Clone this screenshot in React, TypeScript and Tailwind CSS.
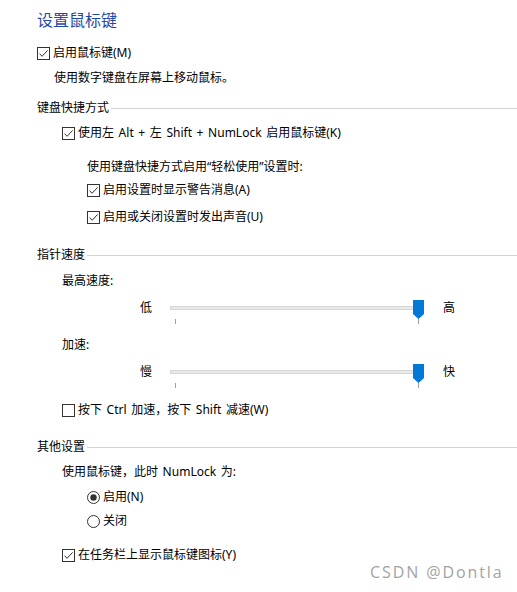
import React from "react";

const Check = ({ checked }: { checked: boolean }) => (
  <svg width="13" height="13" viewBox="0 0 13 13" className="shrink-0 block">
    <rect x="0.5" y="0.5" width="12" height="12" fill="#fff" stroke="#333333" />
    {checked && (
      <path d="M2.5 6.6L5.1 9.3L10.6 3.4" fill="none" stroke="#333333" strokeWidth="1" />
    )}
  </svg>
);

const Radio = ({ checked }: { checked: boolean }) => (
  <svg width="13" height="13" viewBox="0 0 13 13" className="shrink-0 block">
    <circle cx="6.5" cy="6.5" r="6" fill="#fff" stroke="#333333" />
    {checked && <circle cx="6.5" cy="6.5" r="3.2" fill="#333333" />}
  </svg>
);

const Header = ({ text, mt }: { text: string; mt: string }) => (
  <div className={`flex items-center h-[20px] ml-[37px] ${mt}`}>
    <span className="leading-[20px] whitespace-nowrap">{text}</span>
    <div className="flex-1 h-px bg-[#d4d4d4] ml-[2px]" />
  </div>
);

const Slider = ({ left, right, mt }: { left: string; right: string; mt: string }) => (
  <div className={`flex items-center h-[20px] ml-[140px] ${mt}`}>
    <span className="leading-[20px] w-[12px]">{left}</span>
    <div className="relative w-[251px] h-[20px] ml-[18px]">
      <div className="absolute left-0 right-0 top-[8px] h-[4px] bg-[#e7eaea] border border-[#d6d6d6]" />
      <svg
        width="11"
        height="19"
        viewBox="0 0 11 19"
        className="absolute left-[243px] top-[2px]"
      >
        <polygon points="0,0 11,0 11,14 5.5,19 0,14" fill="#0078d7" />
      </svg>
      <div className="absolute left-[5px] top-[21px] w-px h-[5px] bg-[#a0a0a0]" />
      <div className="absolute left-[248px] top-[21px] w-px h-[5px] bg-[#a0a0a0]" />
    </div>
    <span className="leading-[20px] ml-[22px]">{right}</span>
  </div>
);

export default function App() {
  return (
    <div
      className="relative w-[517px] h-[592px] bg-white overflow-hidden text-[12px] text-black [word-spacing:1.5px]"
      style={{ fontFamily: '"Noto Sans", "Noto Sans CJK SC", sans-serif' }}
    >
      <div className="flex flex-col pt-[8px]">
        <div className="h-[24px] ml-[37px] flex items-center text-[16px] leading-[24px] text-[#1f4aa8]">
          设置鼠标键
        </div>

        <div className="flex items-center h-[20px] ml-[37px] mt-[11px] gap-[3px]">
          <Check checked />
          <span className="leading-[20px]">启用鼠标键(M)</span>
        </div>

        <div className="flex items-center h-[20px] ml-[54px] mt-[5px]">
          <span className="leading-[20px]">使用数字键盘在屏幕上移动鼠标。</span>
        </div>

        <Header text="键盘快捷方式" mt="mt-[10px]" />

        <div className="flex items-center h-[20px] ml-[62px] mt-[5px] gap-[3px]">
          <Check checked />
          <span className="leading-[20px] whitespace-nowrap">
            使用左 Alt + 左 Shift + NumLock 启用鼠标键(K)
          </span>
        </div>

        <div className="flex items-center h-[20px] ml-[87px] mt-[14px]">
          <span className="leading-[20px]">使用键盘快捷方式启用“轻松使用”设置时:</span>
        </div>

        <div className="flex items-center h-[20px] ml-[87px] mt-[3px] gap-[3px]">
          <Check checked />
          <span className="leading-[20px]">启用设置时显示警告消息(A)</span>
        </div>

        <div className="flex items-center h-[20px] ml-[87px] mt-[7px] gap-[3px]">
          <Check checked />
          <span className="leading-[20px]">启用或关闭设置时发出声音(U)</span>
        </div>

        <Header text="指针速度" mt="mt-[18px]" />

        <div className="flex items-center h-[20px] ml-[62px] mt-[6px]">
          <span className="leading-[20px]">最高速度:</span>
        </div>

        <Slider left="低" right="高" mt="mt-[7px]" />

        <div className="flex items-center h-[20px] ml-[62px] mt-[17px]">
          <span className="leading-[20px]">加速:</span>
        </div>

        <Slider left="慢" right="快" mt="mt-[7px]" />

        <div className="flex items-center h-[20px] ml-[62px] mt-[18px] gap-[3px]">
          <Check checked={false} />
          <span className="leading-[20px] whitespace-nowrap">按下 Ctrl 加速，按下 Shift 减速(W)</span>
        </div>

        <Header text="其他设置" mt="mt-[17px]" />

        <div className="flex items-center h-[20px] ml-[62px] mt-[5px]">
          <span className="leading-[20px] whitespace-nowrap">使用鼠标键，此时 NumLock 为:</span>
        </div>

        <div className="flex items-center h-[20px] ml-[87px] mt-[5px] gap-[3px]">
          <Radio checked />
          <span className="leading-[20px]">启用(N)</span>
        </div>

        <div className="flex items-center h-[20px] ml-[87px] mt-[4px] gap-[3px]">
          <Radio checked={false} />
          <span className="leading-[20px]">关闭</span>
        </div>

        <div className="flex items-center h-[20px] ml-[62px] mt-[14px] gap-[3px]">
          <Check checked />
          <span className="leading-[20px]">在任务栏上显示鼠标键图标(Y)</span>
        </div>
      </div>

      <div
        className="absolute left-[370px] top-[562px] text-[16px] leading-[20px] text-[#a3a3a3] tracking-[1.9px] whitespace-nowrap [word-spacing:0px]"
        style={{ fontFamily: '"Open Sans", sans-serif', textShadow: "0 0 1px #ffffff" }}
      >
        CSDN @Dontla
      </div>
    </div>
  );
}
